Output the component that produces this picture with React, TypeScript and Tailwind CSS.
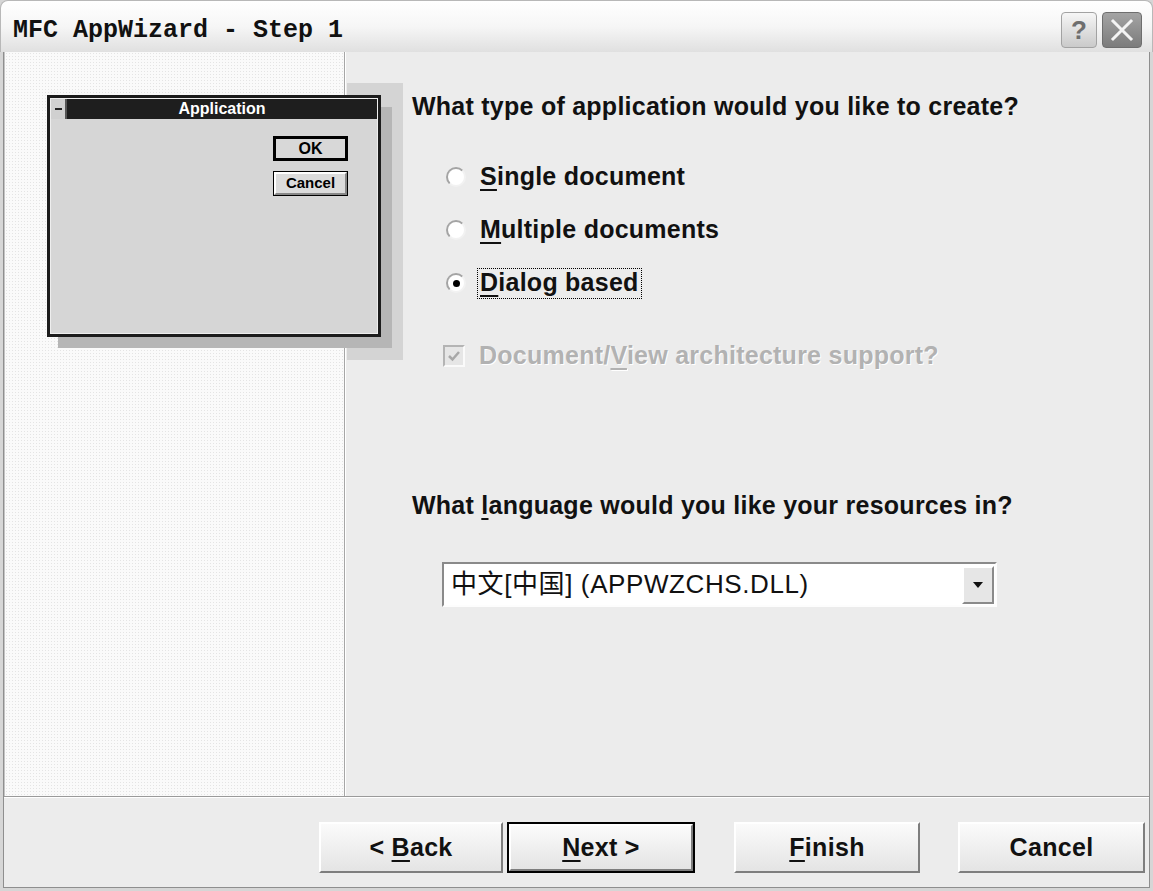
import React from 'react';

const sans = "font-['Liberation_Sans','Noto_Sans_CJK_SC',Arial,sans-serif]";

function Radio({ checked }: { checked?: boolean }) {
  return (
    <span className="w-[20px] h-[20px] shrink-0 rounded-full bg-white border-2 border-t-[#a4a4a4] border-l-[#a4a4a4] border-r-[#f2f2f2] border-b-[#f2f2f2] flex items-center justify-center">
      {checked && <span className="w-[7px] h-[7px] rounded-full bg-black" />}
    </span>
  );
}

function Btn({ children, def, className }: { children: React.ReactNode; def?: boolean; className?: string }) {
  return (
    <div className={`h-[51px] ${def ? 'border-2 border-black' : ''} ${className ?? ''}`}>
      <div className="h-full border-2 border-t-white border-l-white border-b-[#7e7e7e] border-r-[#7e7e7e] bg-gradient-to-b from-[#fbfbfb] to-[#e4e4e4] flex items-center justify-center text-[25px] font-bold text-[#111] tracking-[0.3px]">
        {children}
      </div>
    </div>
  );
}

export default function App() {
  return (
    <div className={`w-[1153px] h-[891px] flex flex-col bg-[#d6d6d6] overflow-hidden ${sans}`}>
      {/* Title bar */}
      <div className="h-[52px] shrink-0 flex items-center pl-[12px] pr-[10px] bg-gradient-to-b from-white via-[#f6f6f6] to-[#e0e0e0] rounded-t-[8px] border-t border-x border-[#b8b8b8]">
        <span className="font-['Liberation_Mono',monospace] font-bold text-[25px] text-[#111] pt-[8px]">MFC AppWizard - Step 1</span>
        <div className="ml-auto flex gap-[5px] pt-[7px]">
          <div className="w-[36px] h-[36px] rounded-[4px] border border-[#a2a2a2] bg-gradient-to-b from-[#f6f6f6] to-[#cacaca] flex items-center justify-center text-[26px] font-bold text-[#6e6e6e]">?</div>
          <div className="w-[40px] h-[36px] rounded-[4px] border border-[#6e6e6e] bg-gradient-to-b from-[#a4a4a4] to-[#7c7c7c] flex items-center justify-center">
            <svg width="24" height="24" viewBox="0 0 24 24">
              <path d="M3 3 L21 21 M21 3 L3 21" stroke="#f4f4f4" strokeWidth="3" strokeLinecap="square" />
            </svg>
          </div>
        </div>
      </div>

      {/* Body */}
      <div className="flex-1 flex flex-col px-[3px] pb-[3px]">
        <div className="flex-1 flex flex-col border-x border-b border-[#8e8e8e]">
          {/* Content area */}
          <div className="relative h-[744px] shrink-0 flex">
            <div className="w-[341px] bg-[#fafafa] bg-[radial-gradient(#e4e4e4_1px,transparent_1px)] [background-size:3px_3px] border-l border-[#c4c4c4] border-r border-r-[#a6a6a6]" />
            <div className="flex-1 bg-[#ececec] border-l border-white flex flex-col pl-[66px] tracking-[0.25px]">
              <div className="mt-[40px] h-[30px] flex items-center text-[25px] font-bold text-[#111]">
                What type of application would you like to create?
              </div>

              <div className="mt-[40px] flex flex-col gap-[23px] ml-[34px]">
                <div className="h-[30px] flex items-center gap-[11px]">
                  <Radio />
                  <span className="px-[3px] text-[25px] font-bold text-[#111]">
                    <u className="underline-offset-[4px]">S</u>ingle document
                  </span>
                </div>
                <div className="h-[30px] flex items-center gap-[11px]">
                  <Radio />
                  <span className="px-[3px] text-[25px] font-bold text-[#111]">
                    <u className="underline-offset-[4px]">M</u>ultiple documents
                  </span>
                </div>
                <div className="h-[30px] flex items-center gap-[11px]">
                  <Radio checked />
                  <span className="px-[2px] h-[31px] flex items-center border border-dotted border-black text-[25px] font-bold text-[#111]">
                    <span>
                      <u className="underline-offset-[4px]">D</u>ialog based
                    </span>
                  </span>
                </div>
              </div>

              <div className="mt-[43px] ml-[31px] h-[30px] flex items-center gap-[14px]">
                <span className="w-[22px] h-[22px] shrink-0 border-2 border-t-[#b4b4b4] border-l-[#b4b4b4] border-r-[#fafafa] border-b-[#fafafa] bg-[#e6e6e6] flex items-center justify-center">
                  <svg width="14" height="14" viewBox="0 0 14 14">
                    <path d="M2 7 L5.5 10.5 L12 3" stroke="#a8a8a8" strokeWidth="2.5" fill="none" />
                  </svg>
                </span>
                <span className="text-[25px] font-bold text-[#b2b2b2] [text-shadow:1px_1px_0_#ffffff]">
                  Document/<u className="underline-offset-[4px]">V</u>iew architecture support?
                </span>
              </div>

              <div className="mt-[120px] h-[30px] flex items-center text-[25px] font-bold text-[#111]">
                <span>
                  What <u className="underline-offset-[4px]">l</u>anguage would you like your resources in?
                </span>
              </div>

              <div className="mt-[41px] ml-[30px] w-[555px] h-[45px] border-2 border-t-[#8a8a8a] border-l-[#8a8a8a] border-r-[#fdfdfd] border-b-[#fdfdfd] bg-white flex items-center">
                <span className="flex-1 pl-[7px] text-[26px] text-[#111] tracking-[0.6px]">中文[中国] (APPWZCHS.DLL)</span>
                <div className="w-[32px] h-[38px] mr-[1px] border-2 border-t-white border-l-white border-b-[#8a8a8a] border-r-[#8a8a8a] bg-[#e6e6e6] flex items-center justify-center">
                  <svg width="12" height="8" viewBox="0 0 12 8">
                    <path d="M1 1 L11 1 L6 7 Z" fill="#111" />
                  </svg>
                </div>
              </div>
            </div>

            {/* Preview picture of a dialog application */}
            <div className="absolute left-[343px] top-[31px] w-[56px] h-[277px] bg-[#d4d4d4]" />
            <div className="absolute left-[54px] top-[55px] w-[334px] h-[241px] bg-[#b6b6b6]" />
            <div className="absolute left-[43px] top-[43px] w-[334px] h-[242px] bg-[#1c1c1c] p-[3px]">
              <div className="h-full flex flex-col border border-[#eeeeee] bg-[#d6d6d6]">
                <div className="h-[20px] shrink-0 flex bg-[#1e1e1e]">
                  <div className="w-[16px] h-full bg-[#d0d0d0] border-r-2 border-[#555] flex items-center justify-center">
                    <span className="w-[7px] h-[2px] bg-[#222]" />
                  </div>
                  <div className="flex-1 text-center text-white font-bold text-[16px] leading-[20px]">Application</div>
                </div>
                <div className="flex flex-col items-end pr-[29px] pt-[17px] gap-[10px]">
                  <div className="w-[75px] h-[25px] border-[3px] border-black bg-[#d8d8d8] flex items-center justify-center text-[16px] font-bold text-black">OK</div>
                  <div className="w-[75px] h-[25px] border border-black bg-[#dcdcdc] flex">
                    <div className="flex-1 border-2 border-t-white border-l-white border-b-[#888] border-r-[#888] flex items-center justify-center text-[15px] font-bold text-black">Cancel</div>
                  </div>
                </div>
              </div>
            </div>
          </div>

          {/* Separator */}
          <div className="h-[2px] shrink-0 border-t border-[#9a9a9a] bg-white" />

          {/* Buttons */}
          <div className="flex-1 flex items-start pt-[24px] bg-[#ececec]">
            <Btn className="ml-[315px] w-[184px]">
              <span>&lt; <u className="underline-offset-[4px]">B</u>ack</span>
            </Btn>
            <Btn def className="ml-[4px] w-[188px]">
              <span><u className="underline-offset-[4px]">N</u>ext &gt;</span>
            </Btn>
            <Btn className="ml-[39px] w-[186px]">
              <span><u className="underline-offset-[4px]">F</u>inish</span>
            </Btn>
            <Btn className="ml-[38px] w-[187px]">
              <span>Cancel</span>
            </Btn>
          </div>
        </div>
      </div>
    </div>
  );
}
